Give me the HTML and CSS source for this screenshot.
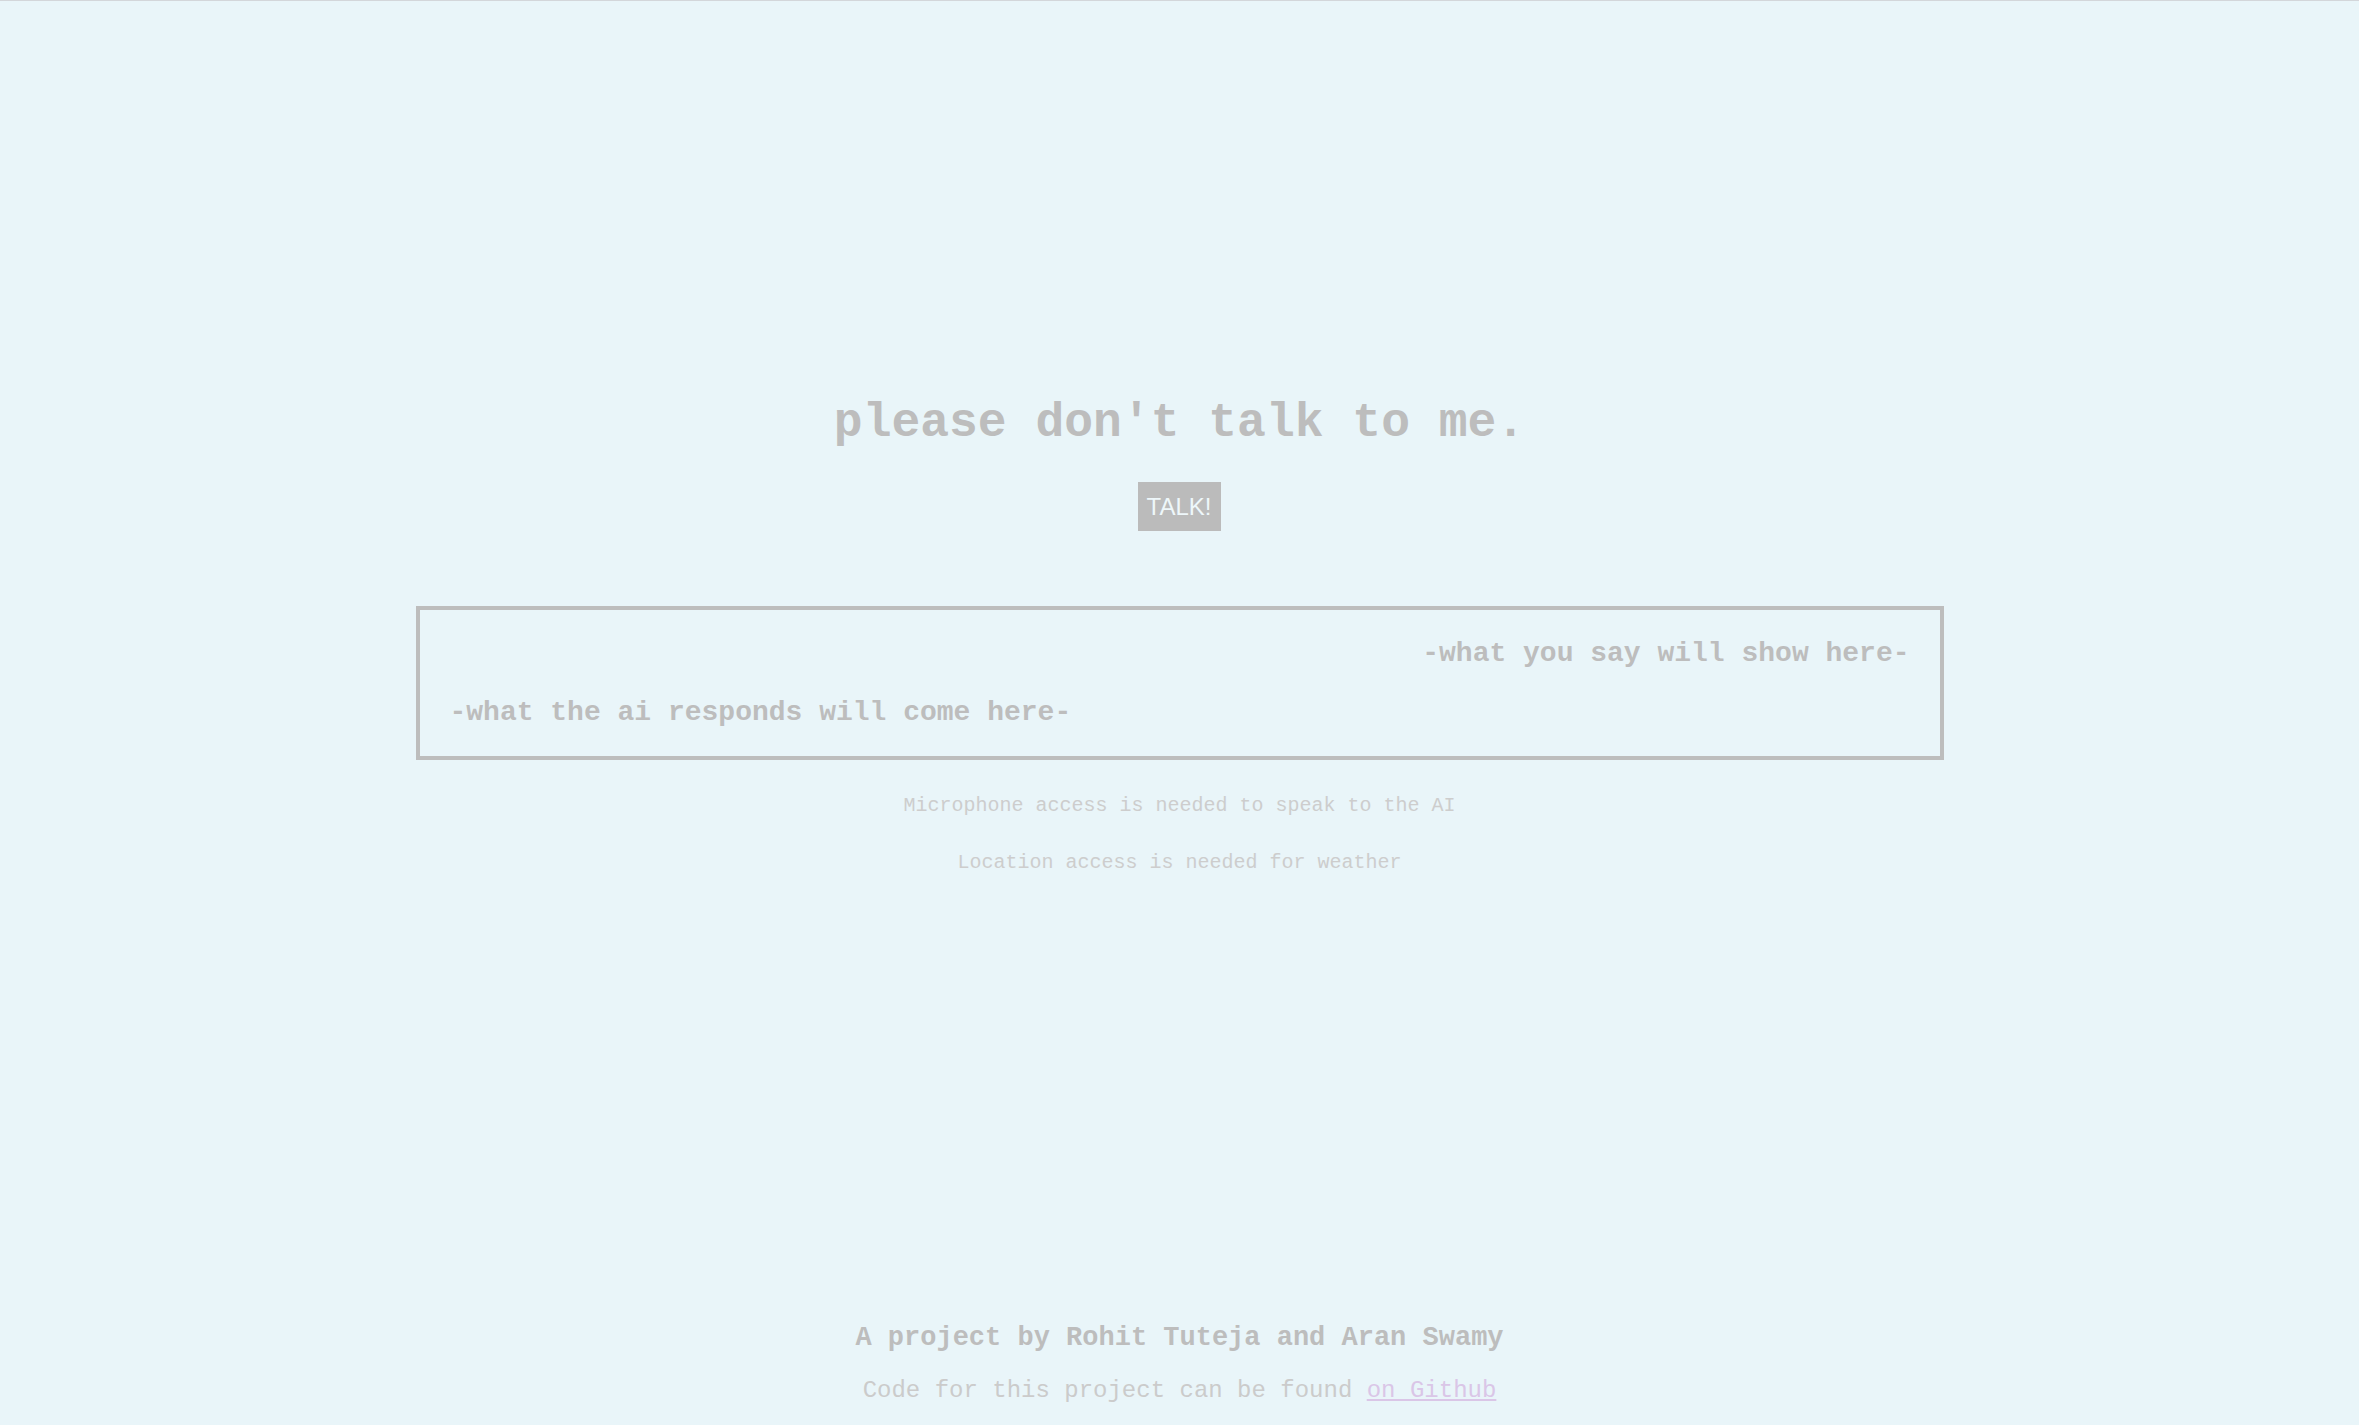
FILE: index.html
```html
<!DOCTYPE html>
<html lang="en">
<head>
<meta charset="utf-8">
<title>please don't talk to me.</title>
<link rel="stylesheet" href="styles.css">
</head>
<body>
<div class="page">
  <main class="main">
    <h1 class="title">please don't talk to me.</h1>
    <button class="talk-btn" type="button">TALK!</button>
    <section class="chat">
      <div class="msg msg-user">-what you say will show here-</div>
      <div class="msg msg-ai">-what the ai responds will come here-</div>
    </section>
    <p class="note">Microphone access is needed to speak to the AI</p>
    <p class="note note-second">Location access is needed for weather</p>
  </main>
  <footer class="footer">
    <p class="credits">A project by Rohit Tuteja and Aran Swamy</p>
    <p class="code">Code for this project can be found <a class="gh-link" href="#">on Github</a></p>
  </footer>
</div>
</body>
</html>
```

FILE: styles.css
```css
html, body {
  margin: 0;
  padding: 0;
}

body {
  background: #e9f5f9;
  font-family: "Liberation Mono", "Courier New", monospace;
  color: #bbbbbb;
}

.page {
  min-height: 100vh;
  box-sizing: border-box;
  border-top: 1px solid #d3d6da;
  display: flex;
  flex-direction: column;
  align-items: center;
}

.main {
  display: flex;
  flex-direction: column;
  align-items: center;
  padding-top: 394px;
  width: 100%;
}

.title {
  margin: 0;
  font-size: 48px;
  line-height: 56px;
  font-weight: bold;
  color: #bdbdbd;
}

.talk-btn {
  margin-top: 31px;
  border: none;
  background: #bbbbbb;
  color: #eef7fa;
  font-family: "Liberation Sans", Arial, sans-serif;
  font-size: 24px;
  line-height: 27px;
  padding: 11px 10px 11px 9px;
  cursor: pointer;
}

.chat {
  margin-top: 75px;
  width: 1528px;
  box-sizing: border-box;
  border: 4px solid #bdbdbd;
  padding: 28px 30px 27px 30px;
  display: flex;
  flex-direction: column;
  gap: 27px;
}

.msg {
  font-size: 28px;
  line-height: 32px;
  font-weight: bold;
  color: #bdbdbd;
}

.msg-user {
  text-align: right;
}

.msg-ai {
  text-align: left;
}

.note {
  margin: 34px 0 0;
  font-size: 20px;
  line-height: 24px;
  color: #cdcdcd;
}

.note-second {
  margin-top: 33px;
}

.footer {
  margin-top: auto;
  padding-bottom: 20px;
  display: flex;
  flex-direction: column;
  align-items: center;
}

.credits {
  margin: 0;
  font-size: 27px;
  line-height: 32px;
  font-weight: bold;
  color: #bdbdbd;
}

.code {
  margin: 23px 0 0;
  font-size: 24px;
  line-height: 28px;
  color: #cbcbcb;
}

.gh-link {
  color: #dac6e7;
  text-decoration: underline;
}
```
